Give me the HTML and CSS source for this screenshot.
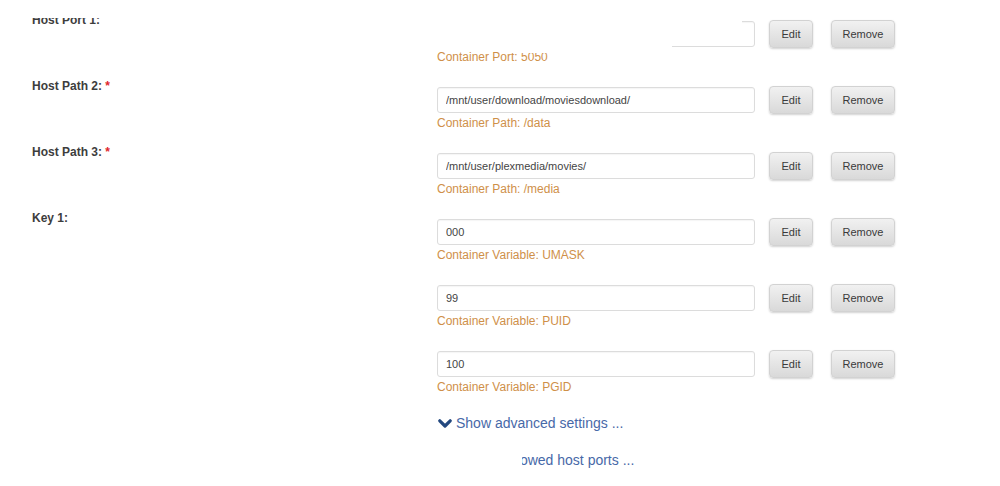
FILE: index.html
```html
<!DOCTYPE html>
<html>
<head>
<meta charset="utf-8">
<link rel="stylesheet" href="styles.css">
</head>
<body>
<div class="page">
  <div class="form">
    <div class="row">
      <div class="label">Host Port 1:</div>
      <div class="entries">
        <div class="entry">
          <div class="line"><input class="field" type="text" value="5050"><button class="btn btn-edit">Edit</button><button class="btn btn-remove">Remove</button></div>
          <div class="help">Container Port: 5050</div>
        </div>
      </div>
    </div>
    <div class="row">
      <div class="label">Host Path 2: <span class="req">*</span></div>
      <div class="entries">
        <div class="entry">
          <div class="line"><input class="field" type="text" value="/mnt/user/download/moviesdownload/"><button class="btn btn-edit">Edit</button><button class="btn btn-remove">Remove</button></div>
          <div class="help">Container Path: /data</div>
        </div>
      </div>
    </div>
    <div class="row">
      <div class="label">Host Path 3: <span class="req">*</span></div>
      <div class="entries">
        <div class="entry">
          <div class="line"><input class="field" type="text" value="/mnt/user/plexmedia/movies/"><button class="btn btn-edit">Edit</button><button class="btn btn-remove">Remove</button></div>
          <div class="help">Container Path: /media</div>
        </div>
      </div>
    </div>
    <div class="row">
      <div class="label">Key 1:</div>
      <div class="entries">
        <div class="entry">
          <div class="line"><input class="field" type="text" value="000"><button class="btn btn-edit">Edit</button><button class="btn btn-remove">Remove</button></div>
          <div class="help">Container Variable: UMASK</div>
        </div>
        <div class="entry">
          <div class="line"><input class="field" type="text" value="99"><button class="btn btn-edit">Edit</button><button class="btn btn-remove">Remove</button></div>
          <div class="help">Container Variable: PUID</div>
        </div>
        <div class="entry">
          <div class="line"><input class="field" type="text" value="100"><button class="btn btn-edit">Edit</button><button class="btn btn-remove">Remove</button></div>
          <div class="help">Container Variable: PGID</div>
        </div>
      </div>
    </div>
    <div class="links">
      <a class="toggle"><svg class="chev" width="14" height="10" viewBox="0 0 14 10"><polyline points="1.8,1.8 7,7 12.2,1.8" fill="none" stroke="#23487f" stroke-width="3.2" stroke-linecap="round" stroke-linejoin="round"/></svg>Show advanced settings ...</a>
      <a class="toggle toggle-ports"><svg class="chev" width="14" height="10" viewBox="0 0 14 10"><polyline points="1.8,1.8 7,7 12.2,1.8" fill="none" stroke="#23487f" stroke-width="3.2" stroke-linecap="round" stroke-linejoin="round"/></svg>Show allowed host ports ...</a>
    </div>
  </div>
  <div class="mask mask-a"></div>
  <div class="mask mask-b"></div>
  <div class="mask mask-c"></div>
  <div class="mask mask-d"></div>
  <div class="mask mask-e"></div>
  <div class="mask mask-f"></div>
</div>
</body>
</html>
```

FILE: styles.css
```css
* { box-sizing: border-box; }
html, body { margin: 0; padding: 0; background: #fff; }
body {
  font-family: "Liberation Sans", Arial, sans-serif;
  color: #333;
  width: 1000px;
  height: 486px;
  overflow: hidden;
}
.page { position: relative; width: 1000px; height: 486px; }
.form { padding-top: 12px; }
.row { display: flex; }
.label {
  width: 437px;
  padding-left: 32px;
  font-size: 12px;
  line-height: 16px;
  font-weight: bold;
  color: #3d3d3d;
}
.req { color: #e0262b; }
.entries { display: flex; flex-direction: column; }
.entry { padding-top: 9px; padding-bottom: 13px; }
.line { display: flex; align-items: flex-start; height: 26px; }
.field {
  width: 318px;
  height: 26px;
  margin: 0;
  border: 1px solid #dcdcdc;
  border-radius: 3px;
  padding: 0 8px;
  font-family: "Liberation Sans", Arial, sans-serif;
  font-size: 11px;
  color: #444;
  background: #fff;
  box-shadow: inset 0 1px 1px rgba(0,0,0,0.04);
  outline: none;
}
.btn {
  height: 28px;
  margin-top: -1px;
  border: 1px solid #d2d2d2;
  border-radius: 4px;
  background: linear-gradient(#f1f1f1, #d9d9d9);
  box-shadow: 0 1px 2px rgba(0,0,0,0.18);
  font-family: "Liberation Sans", Arial, sans-serif;
  font-size: 11px;
  color: #3a3a3a;
  padding: 0;
}
.btn-edit { width: 44px; margin-left: 14px; }
.btn-remove { width: 64px; margin-left: 18px; }
.help {
  margin-top: 2px;
  font-size: 12px;
  line-height: 16px;
  color: #cf9049;
}
.links {
  padding-left: 438px;
  padding-top: 5px;
  display: flex;
  flex-direction: column;
  gap: 17px;
}
.toggle {
  display: flex;
  align-items: center;
  font-size: 14px;
  line-height: 20px;
  color: #4769a8;
}
.toggle-ports { padding-left: 11px; }
.chev { margin-right: 4px; margin-top: 1px; }
.mask { position: absolute; background: #fff; }
.mask-a { left: 437px; top: 0; width: 235px; height: 48px; }
.mask-b { left: 672px; top: 0; width: 70px; height: 44px; }
.mask-c { left: 0; top: 0; width: 420px; height: 18px; }
.mask-d { left: 505px; top: 44px; width: 100px; height: 9px; }
.mask-e { left: 430px; top: 444px; width: 87px; height: 30px; }
.mask-f { left: 517px; top: 453px; width: 5px; height: 16px; }
```
